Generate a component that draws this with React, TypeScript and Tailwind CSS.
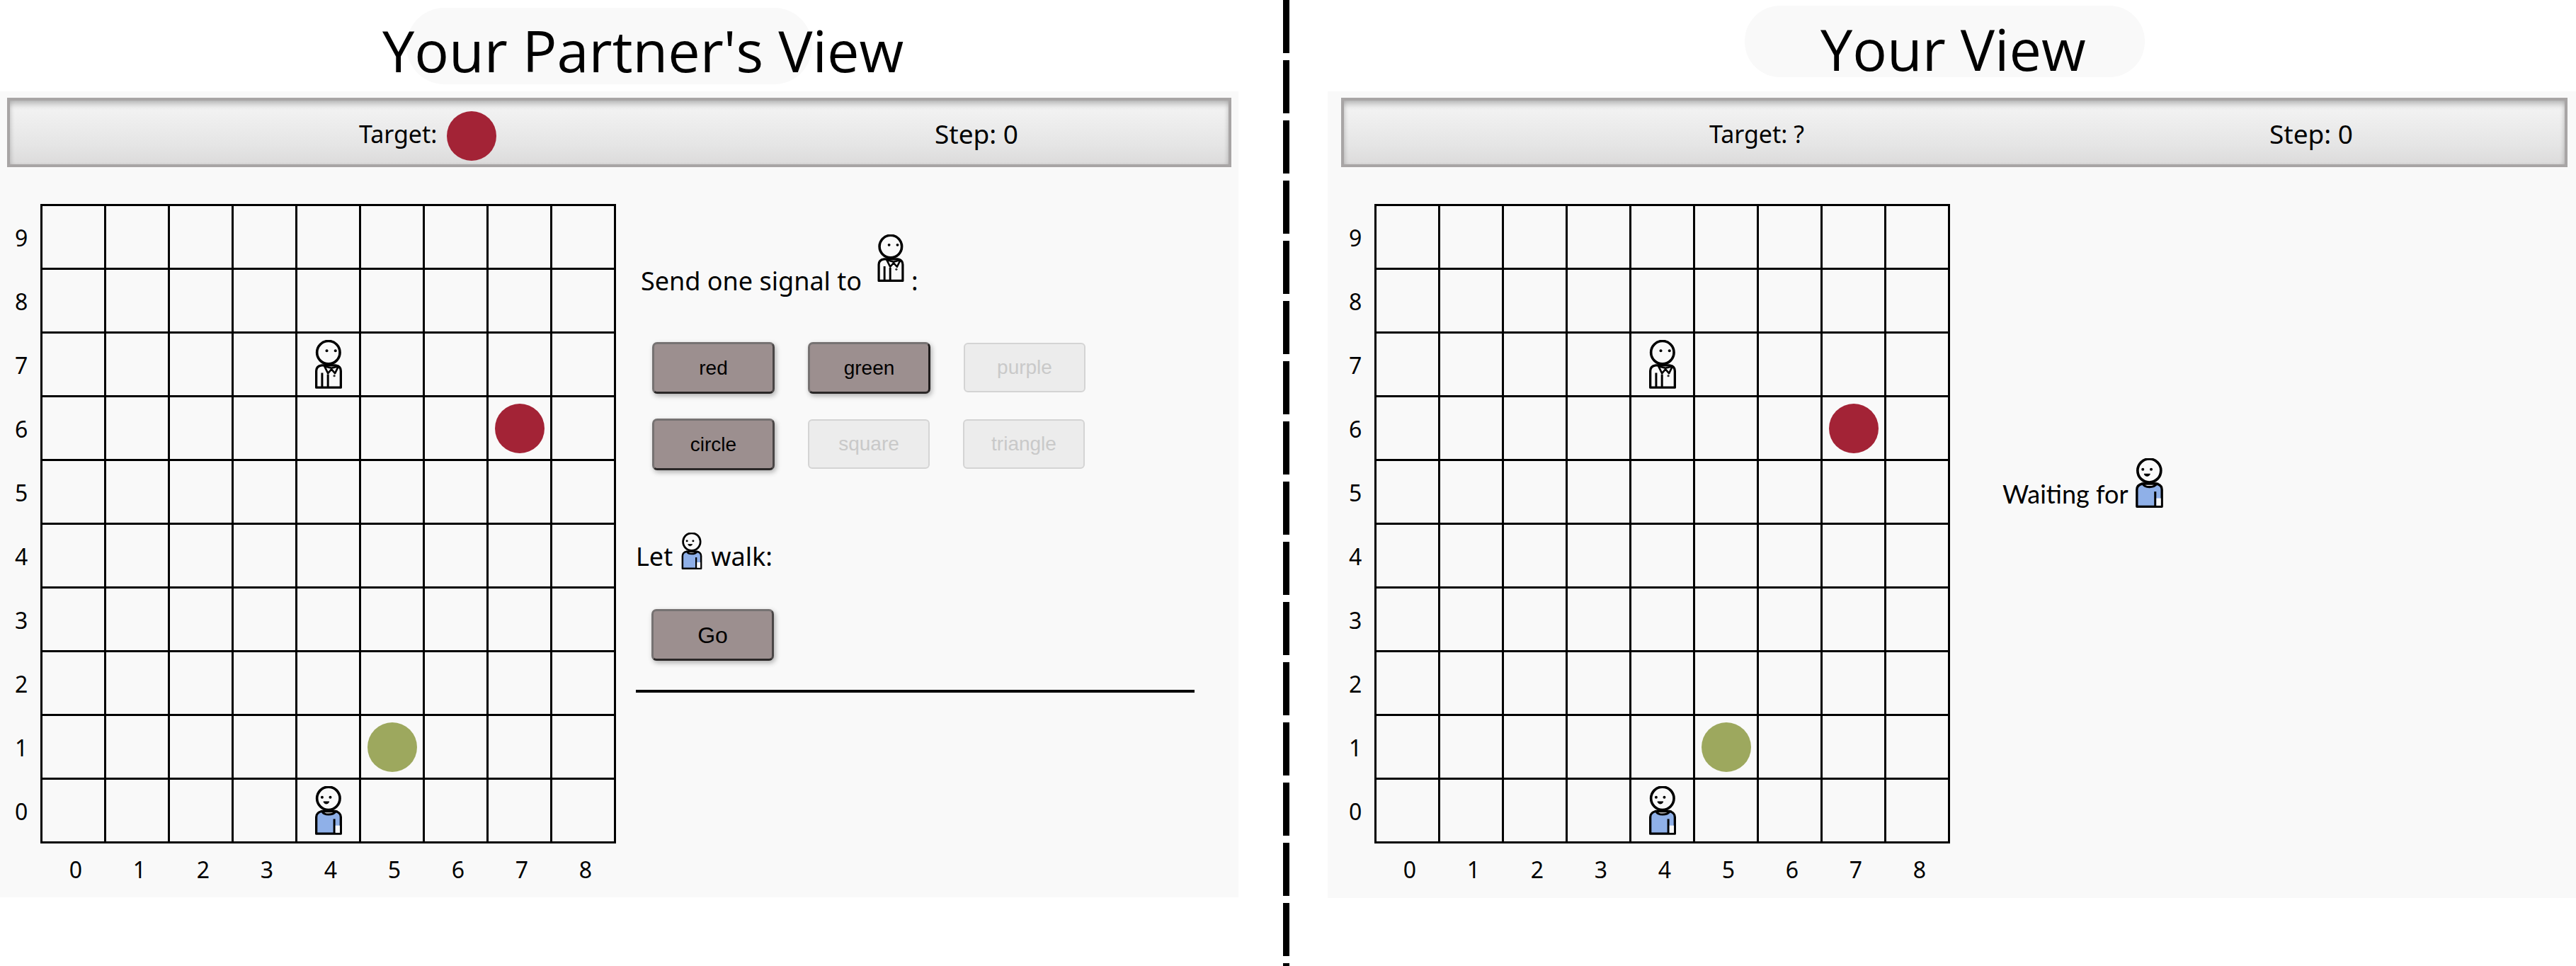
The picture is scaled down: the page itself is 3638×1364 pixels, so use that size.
const SuitMan = ({ className }: { className: string }) => (
  <svg viewBox="0 0 115 208" className={className}>
    <path d="M5 203V132C5 118 15 110 28 108H87C100 110 110 118 110 132V203Z" fill="#f9f9f9" stroke="#000" strokeWidth="10" strokeLinejoin="round" />
    <circle cx="57" cy="53" r="49" fill="#f9f9f9" stroke="#000" strokeWidth="11" />
    <circle cx="50" cy="46" r="6" fill="#000" />
    <circle cx="87" cy="46" r="6" fill="#000" />
    <path d="M30 140V203M55 146V203" stroke="#000" strokeWidth="9" fill="none" />
    <path d="M40 112L55 142L70 125L85 142L100 112L70 120Z" fill="#f9f9f9" stroke="#000" strokeWidth="8" strokeLinejoin="round" />
    <circle cx="82" cy="153" r="5" fill="#333" />
  </svg>
);

const Kid = ({ className }: { className: string }) => (
  <svg viewBox="0 0 115 208" className={className}>
    <path d="M5 203V132C5 118 15 110 28 107H87C100 110 110 118 110 132V203Z" fill="#8fb0e8" stroke="#000" strokeWidth="10" strokeLinejoin="round" />
    <path d="M30 108C38 125 76 125 88 108Z" fill="#f9f9f9" stroke="#000" strokeWidth="9" />
    <circle cx="57" cy="52" r="49" fill="#f9f9f9" stroke="#000" strokeWidth="11" />
    <circle cx="30" cy="47" r="6" fill="#000" />
    <circle cx="65" cy="47" r="6" fill="#000" />
    <path d="M36 66C40 78 56 78 60 66Z" fill="#000" stroke="#000" strokeWidth="3" strokeLinejoin="round" />
    <path d="M82 140V203" stroke="#000" strokeWidth="9" fill="none" />
    <rect x="87" y="168" width="19" height="31" fill="#f9f9f9" />
  </svg>
);

const Dot = ({ color }: { color: string }) => (
  <span className={`block w-[70px] h-[70px] rounded-full ${color}`} />
);

const rows = [9, 8, 7, 6, 5, 4, 3, 2, 1, 0];
const cols = [0, 1, 2, 3, 4, 5, 6, 7, 8];

const Board = () => (
  <div className="flex flex-col shrink-0">
    <div className="flex">
      <div className="w-[57px] pt-[3px] flex flex-col shrink-0">
        {rows.map((r) => (
          <div key={r} className="h-[90px] flex items-center pl-[21px] text-[32px] leading-none text-black">
            {r}
          </div>
        ))}
      </div>
      <div className="w-[813px] h-[903px] border-t-[3px] border-l-[3px] border-black grid grid-cols-[repeat(9,90px)] grid-rows-[repeat(10,90px)]">
        {rows.flatMap((r) =>
          cols.map((c) => (
            <div key={`${r}-${c}`} className="border-r-[3px] border-b-[3px] border-black flex items-center justify-center">
              {r === 7 && c === 4 && <SuitMan className="w-[38px] h-[69px]" />}
              {r === 0 && c === 4 && <Kid className="w-[38px] h-[69px]" />}
              {r === 6 && c === 7 && <Dot color="bg-[#a32336]" />}
              {r === 1 && c === 5 && <Dot color="bg-[#9da85e]" />}
            </div>
          ))
        )}
      </div>
    </div>
    <div className="flex pl-[62px] mt-[19px]">
      {cols.map((c) => (
        <div key={c} className="w-[90px] text-center text-[32px] leading-[36px] text-black">
          {c}
        </div>
      ))}
    </div>
  </div>
);

const Bar = ({ children }: { children: React.ReactNode }) => (
  <div className="h-[98px] pt-[4px] border-[4px] border-[#a8a5a5] bg-[linear-gradient(#f5f5f5,#e5e5e5_70%,#dcdbdb)] shadow-[inset_0_7px_9px_-2px_rgba(0,0,0,0.25),inset_3px_0_6px_-2px_rgba(0,0,0,0.08),inset_-3px_0_6px_-2px_rgba(0,0,0,0.08)] flex items-center text-[34px] text-black">
    {children}
  </div>
);

const Btn = ({ label, big, dark }: { label: string; big?: boolean; dark?: boolean }) => (
  <button className={`w-[173px] h-[73px] rounded-[7px] bg-[#9c8f8f] border-[3px] border-t-[#767272] border-l-[#767272] border-b-[#2a2727] shadow-[2px_3px_7px_rgba(0,0,0,0.3)] text-black font-['Liberation_Sans',sans-serif] ${dark ? 'border-r-[#1f1c1c]' : 'border-r-[#4a4646]'} ${big ? 'text-[32px]' : 'text-[28px]'}`}>
    {label}
  </button>
);

const Off = ({ label }: { label: string }) => (
  <button className="w-[172px] h-[70px] my-[1px] rounded-[6px] bg-[#ececec] border-[2px] border-[#d4d4d4] text-[#c9c9c9] text-[28px] font-['Liberation_Sans',sans-serif]">
    {label}
  </button>
);

export default function App() {
  return (
    <div className="w-[3638px] h-[1364px] overflow-hidden bg-white flex font-['Noto_Sans',sans-serif] text-black">
      <div className="w-[1749px] shrink-0">
        <div className="h-[129px] pt-[11px] pl-[574px]">
          <div className="w-[573px] h-[108px] rounded-[54px] bg-[#f9f9f9] text-[81px] leading-[120px] whitespace-nowrap font-['Open_Sans',sans-serif] -indent-[34px]">
            Your Partner's View
          </div>
        </div>
        <div className="h-[1138px] bg-[#f9f9f9] pt-[9px] pl-[10px] pr-[10px]">
          <Bar>
            <div className="ml-[493px] w-[813px] flex items-center gap-[14px]">
              <span>Target:</span>
              <span className="mt-[6px]"><Dot color="bg-[#a32336]" /></span>
            </div>
            <span className="text-[37px]">Step: 0</span>
          </Bar>
          <div className="flex mt-[52px] -ml-[10px]">
            <Board />
            <div className="ml-[26px] flex flex-col text-[36px]">
              <div className="flex items-end h-[78px] mt-[42px] pl-[7px]">
                <span className="leading-[32px] mb-[-5px]">Send one signal to</span>
                <SuitMan className="w-[42px] h-[67px] ml-[20px] mb-[10px]" />
                <span className="leading-[32px] ml-[8px] mb-[-5px]">:</span>
              </div>
              <div className="flex gap-[47px] ml-[23px] mt-[75px]">
                <Btn label="red" />
                <Btn label="green" dark />
                <Off label="purple" />
              </div>
              <div className="flex gap-[47px] ml-[23px] mt-[35px]">
                <Btn label="circle" />
                <Off label="square" />
                <Off label="triangle" />
              </div>
              <div className="flex items-end mt-[86px] h-[52px]">
                <span className="leading-[32px]">Let</span>
                <Kid className="w-[30px] h-[52px] mx-[12px] -mb-[2px]" />
                <span className="leading-[32px]">walk:</span>
              </div>
              <div className="ml-[22px] mt-[58px]">
                <Btn label="Go" big />
              </div>
              <div className="w-[789px] h-[4px] bg-black mt-[41px]" />
            </div>
          </div>
        </div>
      </div>
      <div className="ml-[63px] w-[9px] h-[1364px] shrink-0 bg-[repeating-linear-gradient(#000_0,#000_75px,#fff_75px,#fff_85px)]" />
      <div className="flex-1 ml-[54px]">
        <div className="h-[129px] pt-[8px] pl-[589px]">
          <div className="w-[565px] h-[101px] rounded-[50px] bg-[#f9f9f9] text-[81px] leading-[122px] whitespace-nowrap font-['Open_Sans',sans-serif] pl-[107px]">
            Your View
          </div>
        </div>
        <div className="h-[1139px] bg-[#f9f9f9] pt-[9px] pl-[19px] pr-[12px]">
          <Bar>
            <span className="ml-[516px] w-[791px]">Target: ?</span>
            <span className="text-[37px]">Step: 0</span>
          </Bar>
          <div className="flex mt-[52px] -ml-[19px] pl-[9px]">
            <Board />
            <div className="ml-[72px] mt-[359px] flex items-end h-[70px] font-['Lato',sans-serif] text-[36px]">
              <span className="leading-[36px] mb-[2px]">Waiting for</span>
              <Kid className="w-[41px] h-[70px] ml-[9px]" />
            </div>
          </div>
        </div>
      </div>
    </div>
  );
}
